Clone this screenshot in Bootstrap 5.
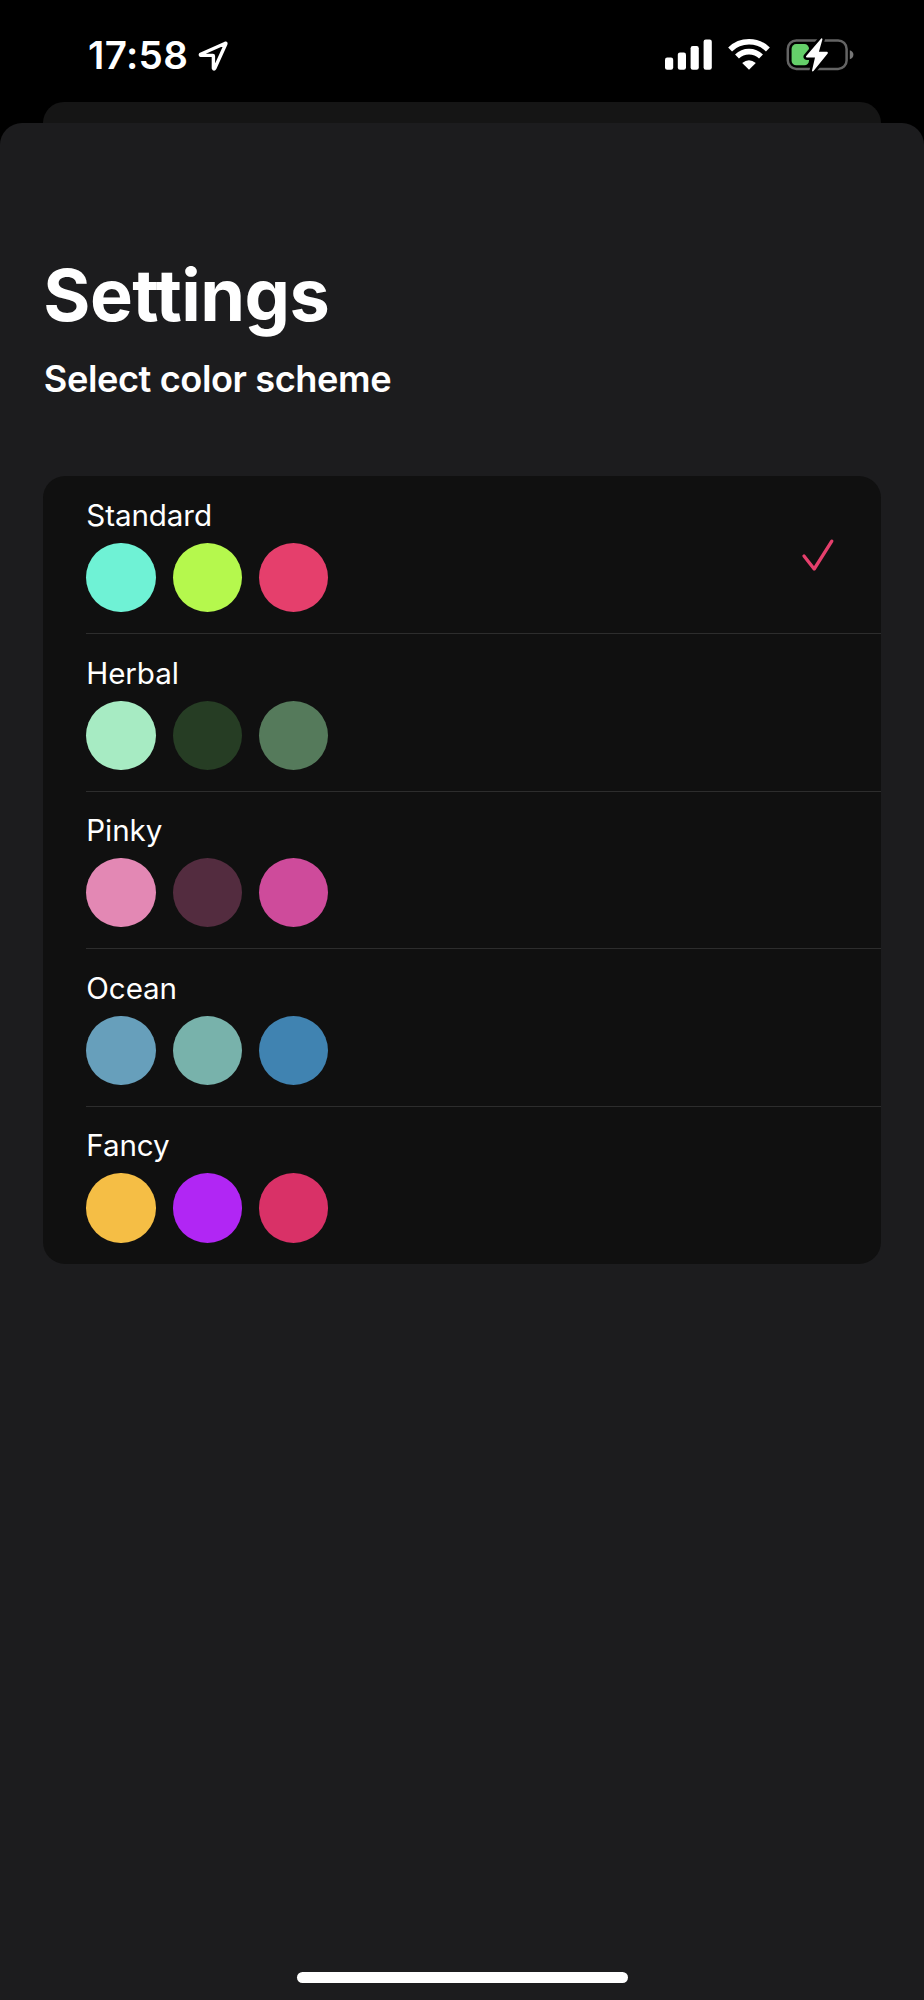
<!DOCTYPE html>
<html lang="en">
<head>
<meta charset="utf-8">
<meta name="viewport" content="width=device-width, initial-scale=1">
<title>Settings</title>
<link rel="stylesheet" href="https://cdn.jsdelivr.net/npm/bootstrap@5.3.0/dist/css/bootstrap.min.css">
<style>
body{background:#000;color:#fff;font-family:Inter,"Liberation Sans",sans-serif;height:2000px;overflow:hidden}
svg{display:block;flex:none}
.status-bar{height:102px;padding:0 70px 0 88px}
.clock{font-size:38.6px;font-weight:600;line-height:46px;letter-spacing:.35px;margin-top:32px}
.loc-icon{margin:40px 0 0 8.7px}
.status-icons{margin-top:38px}
.sheet-back{height:21px;margin:0 43.3px;background:#151515;border-radius:21px 21px 0 0}
.sheet{background:#1c1c1e;border-radius:22px 22px 0 0;height:1877px;padding:0 43.3px}
.title{font-size:72px;font-weight:700;line-height:88px;letter-spacing:-.55px;margin:128px 0 0;font-feature-settings:"calt" 0}
.subtitle{font-size:36.2px;font-weight:600;line-height:44px;letter-spacing:-.42px;margin:18px 0 0 .5px}
.schemes{background:#101010;border-radius:22px;margin-top:75px;height:788px;overflow:hidden}
.scheme{height:157.6px;margin-left:43px;padding-right:46px}
.scheme:first-child{height:157px}
.scheme+.scheme{border-top:1.4px solid #2d2d2d}
.scheme-name{font-size:29.6px;line-height:36px;letter-spacing:-.1px;margin-bottom:10px;padding-top:21px}
.scheme+.scheme .scheme-name{padding-top:20.6px}
.dots{gap:17.1px}
.dot{width:69.3px;height:69.3px;background:var(--c)}
.home{width:331px;height:11px}
</style>
</head>
<body>
<header class="status-bar d-flex align-items-start">
  <div class="clock">17:58</div>
  <svg class="loc-icon" width="32" height="32" viewBox="0 0 32 32" fill="none" stroke="#fff" stroke-width="3.4" stroke-linejoin="round"><path d="M28.4 3.2 3.6 14.2Q2.9 15 4 15.4H15.8Q16.4 15.4 16.4 16V28.2Q17 29.8 17.8 28.2L28.8 4Q29.2 2.9 28.4 3.2Z"/></svg>
  <div class="status-icons d-flex ms-auto">
    <svg width="49" height="33" viewBox="0 0 49 33" fill="#fff"><rect x="2" y="19.6" width="8.2" height="12.2" rx="2.2"/><rect x="14.8" y="14.5" width="8.2" height="17.3" rx="2.2"/><rect x="27.6" y="8" width="8.2" height="23.8" rx="2.2"/><rect x="40.6" y="1.5" width="8.2" height="30.3" rx="2.2"/></svg>
    <svg class="ms-3" width="42" height="33" viewBox="0 0 42 33" fill="none" stroke="#fff" stroke-width="5.6"><path d="M2.1 11.4a27.3 27.3 0 0 1 37.8 0M9 18.5a17.3 17.3 0 0 1 24 0"/><path fill="#fff" stroke="none" d="M21 31.8 14.2 25Q21 19.5 27.8 25Z"/></svg>
    <svg class="ms-3" width="68" height="35" viewBox="0 0 68 35"><rect x="1.8" y="2.5" width="58.8" height="28.4" rx="8.5" fill="none" stroke="#646464" stroke-width="2.5"/><path d="M63.8 12.2Q67.4 13.5 67.4 16.7T63.8 21.2Z" fill="#777"/><rect x="5.6" y="6.1" width="17.4" height="21.2" rx="4.6" fill="#65cf6a"/><path d="M35.2.4 20.2 18Q19.4 19.5 21 19.6H29L26 32.5Q26.2 34.1 27.5 33.1L41.7 15.6Q42.2 14 40.9 13.8H32.9L36.4 1.4Q36.3-.3 35.2.4Z" fill="#fff" stroke="#000" stroke-width="5" stroke-linejoin="round" paint-order="stroke"/></svg>
  </div>
</header>
<div class="sheet-back"></div>
<main class="sheet d-flex flex-column">
  <h1 class="title">Settings</h1>
  <h2 class="subtitle">Select color scheme</h2>
  <section class="schemes">
    <div class="scheme d-flex align-items-center justify-content-between">
      <div class="align-self-start"><div class="scheme-name">Standard</div><div class="dots d-flex"><span class="dot rounded-circle" style="--c:#6ff2d5"></span><span class="dot rounded-circle" style="--c:#b5f84d"></span><span class="dot rounded-circle" style="--c:#e53f6c"></span></div></div>
      <svg width="34" height="34" viewBox="0 0 34 34" fill="none" stroke="#e53f6c" stroke-width="3.3" stroke-linecap="round" stroke-linejoin="round"><path d="M3 18 13.2 31 30.8 3.2"/></svg>
    </div>
    <div class="scheme"><div class="scheme-name">Herbal</div><div class="dots d-flex"><span class="dot rounded-circle" style="--c:#a7ebc3"></span><span class="dot rounded-circle" style="--c:#263d24"></span><span class="dot rounded-circle" style="--c:#557a5b"></span></div></div>
    <div class="scheme"><div class="scheme-name">Pinky</div><div class="dots d-flex"><span class="dot rounded-circle" style="--c:#e388b4"></span><span class="dot rounded-circle" style="--c:#532c3f"></span><span class="dot rounded-circle" style="--c:#ce4b9b"></span></div></div>
    <div class="scheme"><div class="scheme-name">Ocean</div><div class="dots d-flex"><span class="dot rounded-circle" style="--c:#679fbb"></span><span class="dot rounded-circle" style="--c:#78b2ab"></span><span class="dot rounded-circle" style="--c:#4083b1"></span></div></div>
    <div class="scheme"><div class="scheme-name">Fancy</div><div class="dots d-flex"><span class="dot rounded-circle" style="--c:#f5be45"></span><span class="dot rounded-circle" style="--c:#b126f4"></span><span class="dot rounded-circle" style="--c:#d93167"></span></div></div>
  </section>
  <div class="home bg-white rounded-pill mt-auto mx-auto" style="margin-bottom:17px"></div>
</main>
<script src="https://cdn.jsdelivr.net/npm/bootstrap@5.3.0/dist/js/bootstrap.bundle.min.js"></script>
</body>
</html>
